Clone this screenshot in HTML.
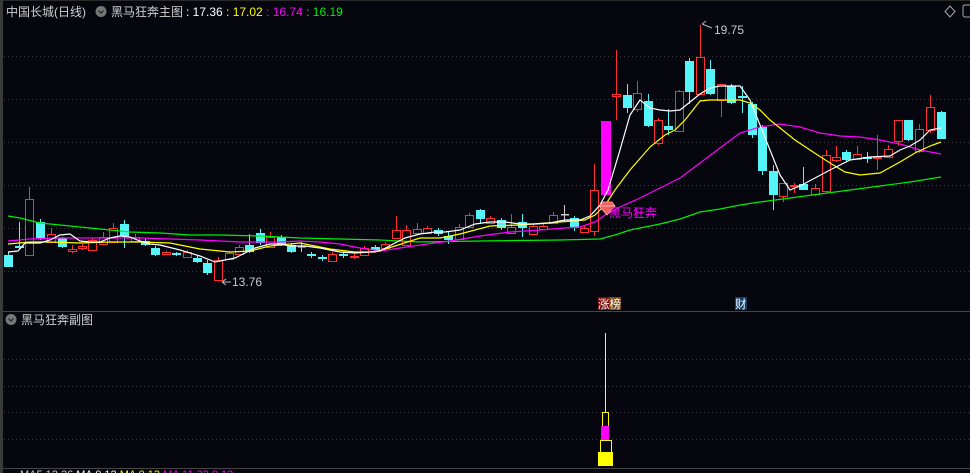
<!DOCTYPE html>
<html><head><meta charset="utf-8"><style>
html,body{margin:0;padding:0;background:#05060e;width:970px;height:473px;overflow:hidden;font-family:"Liberation Sans","Noto Sans CJK SC",sans-serif}
svg{position:absolute;left:0;top:0}
</style></head><body>
<svg id="s" width="970" height="473" viewBox="0 0 970 473" xmlns="http://www.w3.org/2000/svg">
<rect width="970" height="473" fill="#05060e"/>
<rect x="0" y="0" width="3" height="473" fill="#3a3a3a"/>
<line x1="3" y1="0.5" x2="970" y2="0.5" stroke="#2a2a2a"/>
<g stroke="#3c3c3c" stroke-dasharray="1,3">
<line x1="4" y1="56.5" x2="970" y2="56.5"/><line x1="4" y1="99.5" x2="970" y2="99.5"/>
<line x1="4" y1="142.5" x2="970" y2="142.5"/><line x1="4" y1="185.5" x2="970" y2="185.5"/>
<line x1="4" y1="228.5" x2="970" y2="228.5"/><line x1="4" y1="271.5" x2="970" y2="271.5"/>
<line x1="4" y1="359.5" x2="970" y2="359.5"/><line x1="4" y1="386.5" x2="970" y2="386.5"/>
<line x1="4" y1="412.5" x2="970" y2="412.5"/><line x1="4" y1="439.5" x2="970" y2="439.5"/>
</g>
<line x1="3" y1="311.5" x2="970" y2="311.5" stroke="#444"/>
<line x1="3" y1="468.5" x2="970" y2="468.5" stroke="#444"/>
<g id="c"></g>
<g fill="none" stroke-width="1.2">
<polyline stroke="#00ee00" points="8,216 20,218 40,223 70,226 100,229 130,232 160,233 190,235 220,235 260,236 300,238 340,239 380,240 420,242 480,241 560,240 600,239 615,235 630,230 660,224 680,219 700,212 720,209 740,205 760,202 790,198 820,194 850,190 880,186 910,182 941,177"/>
<polyline stroke="#ff00ff" points="8,241 30,239 60,238 100,238 140,238 170,239 200,240 240,242 280,242 300,241 320,242 340,244 360,248 380,251 400,248 420,245 450,241 480,236 510,232 540,230 565,228 580,227 595,222 605,215 620,207 640,198 660,188 680,178 700,163 720,148 740,133 760,127 780,124 800,127 820,133 840,136 860,137 880,140 900,144 920,150 941,154"/>
<polyline stroke="#ffff00" points="8,244 30,242 50,242 80,243 110,242 140,242 170,243 200,249 230,252 250,251 270,246 300,243 330,249 355,252 375,252 395,246 420,238 440,238 460,234 490,226 520,225 560,222 585,220 595,215 600,210 606,204 615,190 630,170 650,147 665,135 675,130 685,120 700,101 710,100 740,100 750,103 760,110 770,120 780,128 795,140 810,150 830,163 845,172 860,175 880,173 900,162 915,153 930,146 941,142"/>
<polyline stroke="#ffffff" points="8,252 18,251 25,243 40,243 50,240 60,235 70,234 80,241 90,242 100,242 110,238 120,236 130,237 140,241 150,244 160,245 180,250 200,256 215,262 225,260 235,258 245,253 255,248 270,244 280,244 290,246 305,246 320,248 340,252 355,253 370,252 380,251 395,243 405,238 420,234 435,232 445,232 460,230 475,224 490,222 505,222 520,224 535,224 550,223 565,220 580,220 590,216 600,205 608,190 620,150 630,115 640,100 650,108 660,110 670,111 680,110 690,102 700,94 710,88 720,86 740,86 750,100 760,125 770,150 780,175 790,190 800,186 815,178 830,170 840,165 850,160 870,157 890,156 900,150 910,146 920,140 930,130 941,128"/>
</g>
<path d="M702,24 L706,21 M702,24 L712,28" stroke="#bbb" fill="none"/>
<text x="714" y="34" font-size="12" fill="#c8c8c8">19.75</text>
<path d="M222,282 L226,279 M222,282 L231,282 M222,282 L226,285" stroke="#bbb" fill="none"/>
<text x="232" y="286" font-size="12" fill="#c8c8c8">13.76</text>
<path d="M599,206 L603,202 L612,202 L615,206 L607,215 Z" fill="#f06060" stroke="#ffaaaa" stroke-width="0.8"/>
<path d="M599,206 L615,206" stroke="#ffcccc" stroke-width="0.8"/>
<text x="609" y="217" font-size="12" fill="#ff00ff">黑马狂奔</text>
<rect x="598" y="297" width="11" height="13" fill="#7a0a0a"/><rect x="609" y="297" width="12" height="13" fill="#7a4a10"/>
<text x="598" y="308" font-size="11.5" fill="#fff">涨榜</text>
<rect x="735" y="297" width="12" height="13" fill="#0d3c6a"/>
<text x="735" y="308" font-size="11.5" fill="#fff">财</text>
<text x="6" y="16" font-size="12" fill="#d0d0d0">中国长城(日线)</text>
<circle cx="101" cy="11.5" r="5.5" fill="#777"/><path d="M98.5,10.5 L101,13 L103.5,10.5" stroke="#222" fill="none" stroke-width="1.2"/>
<text x="111" y="16" font-size="12" fill="#d0d0d0">黑马狂奔主图</text>
<text x="186" y="16" font-size="12"><tspan fill="#fff">: 17.36</tspan><tspan fill="#ffff00"> : 17.02</tspan><tspan fill="#ff00ff"> : 16.74</tspan><tspan fill="#00ee00"> : 16.19</tspan></text>
<path d="M950,6 L955,11.5 L950,17 L945,11.5 Z" stroke="#aaa" fill="none"/>
<rect x="963" y="5" width="10" height="12" rx="2" stroke="#aaa" fill="none"/>
<circle cx="11" cy="319.5" r="5.5" fill="#777"/><path d="M8.5,318.5 L11,321 L13.5,318.5" stroke="#222" fill="none" stroke-width="1.2"/>
<text x="21" y="324" font-size="12" fill="#d0d0d0">黑马狂奔副图</text>
<line x1="605.5" y1="333" x2="605.5" y2="412" stroke="#ffff00"/>
<rect x="602.5" y="412.5" width="6" height="14" fill="none" stroke="#ffff00"/>
<rect x="601" y="426" width="8" height="14" fill="#ff00ff"/>
<rect x="600.5" y="440.5" width="11" height="12" fill="none" stroke="#ffff00"/>
<rect x="598" y="452" width="15" height="14" fill="#ffff00"/>
<text x="20" y="478" font-size="11" fill="#ccc">MA5 12.36 <tspan fill="#fff">MA 0.12</tspan> <tspan fill="#ff0">MA 0.13</tspan> <tspan fill="#f0f">MA 11.32 0.13</tspan></text>
</svg>
<script>
var d=[
[8,'c',252,255,267,267],[19,'c',222,246,248,250],[29,'r',187,199,255,255],[40,'c',219,222,238,240],[51,'r',228,234,242,242],
[62,'c',237,238,247,248],[72,'r',245,249,251,253],[82,'r',244,246,248,250],[92,'r',238,240,250,250],[103,'r',232,237,244,244],
[113,'r',223,228,242,243],[124,'c',220,224,236,248],[135,'r',234,237,241,242],[145,'c',239,241,245,246],[155,'c',246,248,255,256],
[166,'r',251,252,254,255],[176,'c',252,253,255,256],[187,'r',250,252,257,258],[197,'c',256,258,262,263],[207,'c',260,263,273,275],
[218,'r',257,260,280,281],[229,'r',251,253,259,260],[239,'r',245,247,254,255],[249,'c',234,245,252,253],[260,'c',229,233,243,245],
[270,'r',232,237,247,248],[281,'c',235,237,244,246],[291,'c',243,245,252,253],[301,'g',242,246,248,252],[311,'c',252,254,256,258],
[322,'c',255,257,259,261],[332,'r',252,254,261,262],[343,'c',252,254,256,258],[354,'r',254,256,257,259],[364,'r',246,248,255,256],
[375,'c',245,247,250,252],[385,'r',242,244,248,249],[396,'r',216,230,238,239],[406,'r',225,230,245,246],[417,'r',223,229,233,234],
[427,'r',226,228,233,234],[438,'c',228,230,234,236],[448,'c',232,236,240,244],[459,'r',224,227,239,240],[469,'r',213,215,227,228],
[480,'c',209,210,219,224],[490,'r',216,218,223,224],[501,'c',218,220,228,230],[511,'r',214,227,233,234],[522,'c',214,222,228,237],
[533,'r',224,226,234,235],[543,'r',224,226,229,230],[553,'r',212,215,223,224],[564,'g',205,214,216,222],[574,'c',216,218,228,231],
[584,'r',226,228,232,233],[594,'r',164,190,231,236],[605,'m',121,121,195,195],[616,'r',50,94,96,120],[627,'c',84,95,108,113],
[637,'r',81,93,109,112],[648,'c',94,101,126,127],[658,'r',118,120,143,145],[668,'c',109,126,130,135],[679,'r',90,91,131,131],
[689,'c',58,61,92,104],[700,'r',25,57,94,95],[710,'c',60,69,94,95],[721,'r',84,84,100,117],[731,'c',84,86,103,104],
[742,'c',86,96,98,113],[752,'c',102,104,135,138],[762,'c',125,127,171,175],[773,'c',165,171,195,210],[783,'r',183,183,196,202],
[794,'r',183,185,186,193],[803,'c',167,184,190,190],[815,'r',184,188,194,196],[826,'r',150,155,191,193],[836,'r',146,157,160,162],
[846,'c',150,152,160,162],[857,'r',146,154,159,160],[867,'c',152,157,159,163],[877,'r',135,157,158,170],[888,'r',145,149,157,158],
[898,'r',120,120,141,146],[908,'c',120,120,140,141],[919,'r',124,129,151,153],[930,'r',95,107,130,133],[941,'c',111,112,139,139]];
var g=document.getElementById('c'),h='';
d.forEach(function(a){var x=a[0],t=a[1],col=t=='r'?'#ff3030':t=='c'?'#54f4f8':t=='m'?'#ff00ff':'#cccccc';
h+='<line x1="'+(x+.5)+'" y1="'+a[2]+'" x2="'+(x+.5)+'" y2="'+a[5]+'" stroke="'+col+'"/>';
var bh=Math.max(1,a[4]-a[3]);
if(t=='r')h+='<rect x="'+(x-3.5)+'" y="'+(a[3]+.5)+'" width="8" height="'+bh+'" fill="#05060e" stroke="'+col+'"/>';
else if(t=='g')h+='<rect x="'+(x-3)+'" y="'+a[3]+'" width="8" height="1.5" fill="'+col+'"/>';
else h+='<rect x="'+(x-4)+'" y="'+a[3]+'" width="'+(t=='m'?10:9)+'" height="'+bh+'" fill="'+col+'"/>';});
g.innerHTML=h;
</script>
</body></html>
